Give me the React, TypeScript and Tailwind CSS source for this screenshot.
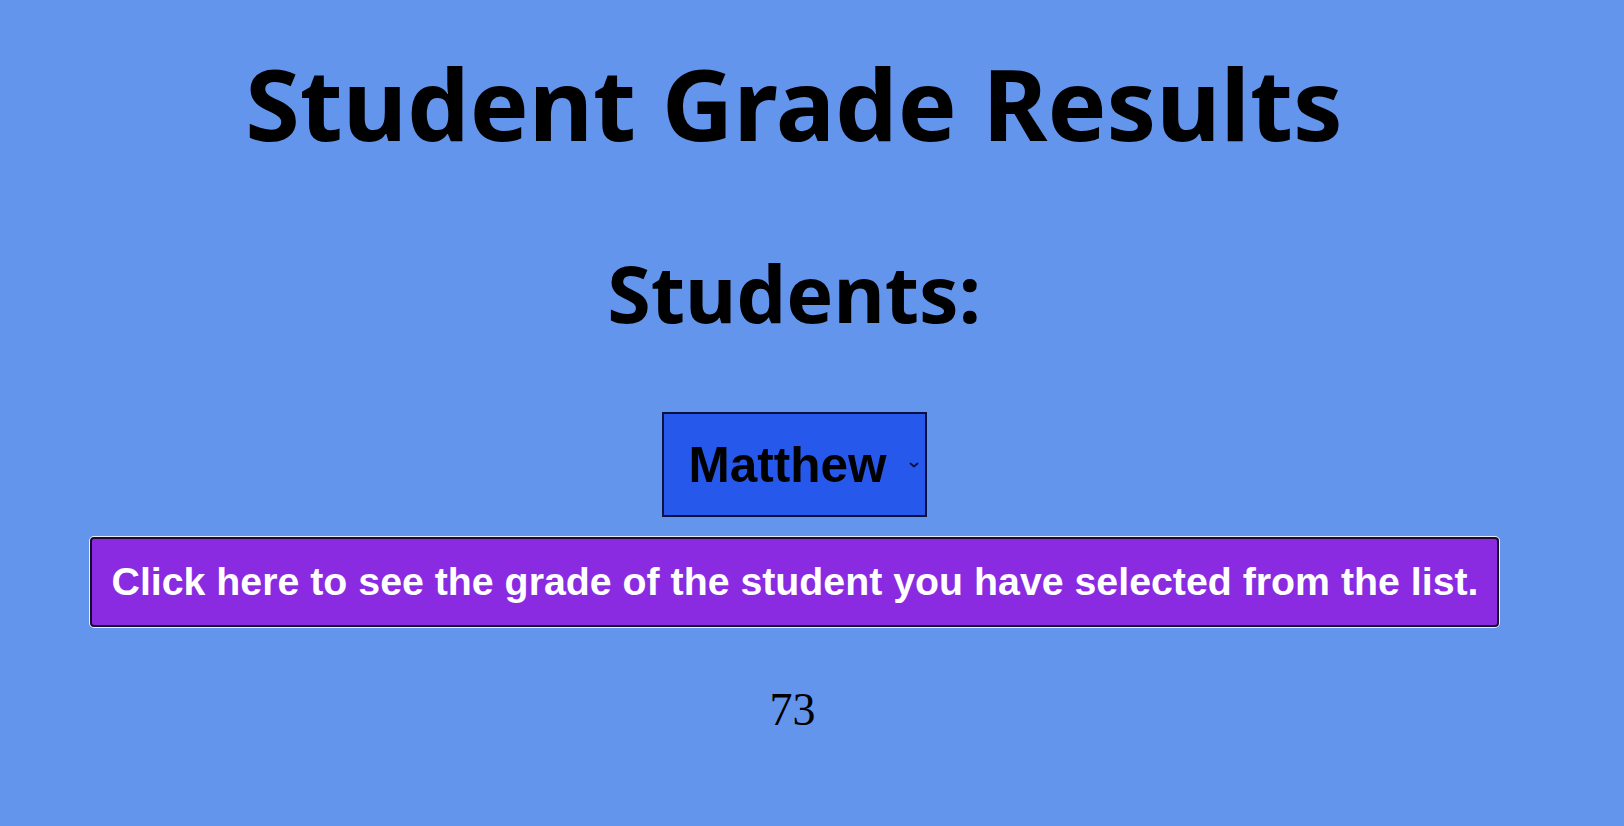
import { useState } from "react";

const students = [
  { name: "Matthew", grade: 73 },
  { name: "Emma", grade: 88 },
  { name: "Liam", grade: 64 },
];

const StudentGradePage = () => {
  const [selected] = useState(0);
  const [grade] = useState<number | null>(students[0].grade);

  return (
    <div className="min-h-screen w-full bg-[#6495ed]">
      <div className="w-[1588px] flex flex-col items-center">
        {/* Heading */}
        <h1 className="mt-[53px] text-[99px] leading-none font-bold text-black font-['Comic_Sans_MS','Noto_Sans',sans-serif]">
          Student Grade Results
        </h1>
        <h2 className="mt-[101px] text-[79px] leading-none font-bold text-black font-['Comic_Sans_MS','Noto_Sans',sans-serif]">
          Students:
        </h2>

        {/* Select */}
        <div className="mt-[80px] w-[265px] h-[105px] flex items-center pl-[25px] pr-[6px] bg-[#2659eb] border-2 border-[#0b1040]">
          <span className="text-[49.5px] leading-none font-bold text-black font-['Liberation_Sans',Arial,sans-serif]">
            {students[selected].name}
          </span>
          <svg
            className="ml-auto"
            width="10"
            height="6"
            viewBox="0 0 10 6"
            fill="none"
          >
            <path
              d="M1.5 1.5 L5 4.5 L8.5 1.5"
              stroke="#0b1040"
              strokeWidth="1.8"
              strokeLinecap="round"
              strokeLinejoin="round"
            />
          </svg>
        </div>

        {/* Button */}
        <button className="mt-[20px] w-[1409px] h-[90px] flex items-center pl-[20px] bg-[#8a2be2] border-2 border-[#1a0b2e] rounded-[4px] shadow-[0_0_0_1px_#e6ecfb]">
          <span className="text-[39.3px] leading-none font-bold text-white font-['Liberation_Sans',Arial,sans-serif]">
            Click here to see the grade of the student you have selected from
            the list.
          </span>
        </button>

        {/* Result */}
        {grade !== null && (
          <p className="mt-[60px] pr-[3px] text-[46px] leading-none text-black font-['Liberation_Serif','Times_New_Roman',serif]">
            {grade}
          </p>
        )}
      </div>
    </div>
  );
};

export default StudentGradePage;
